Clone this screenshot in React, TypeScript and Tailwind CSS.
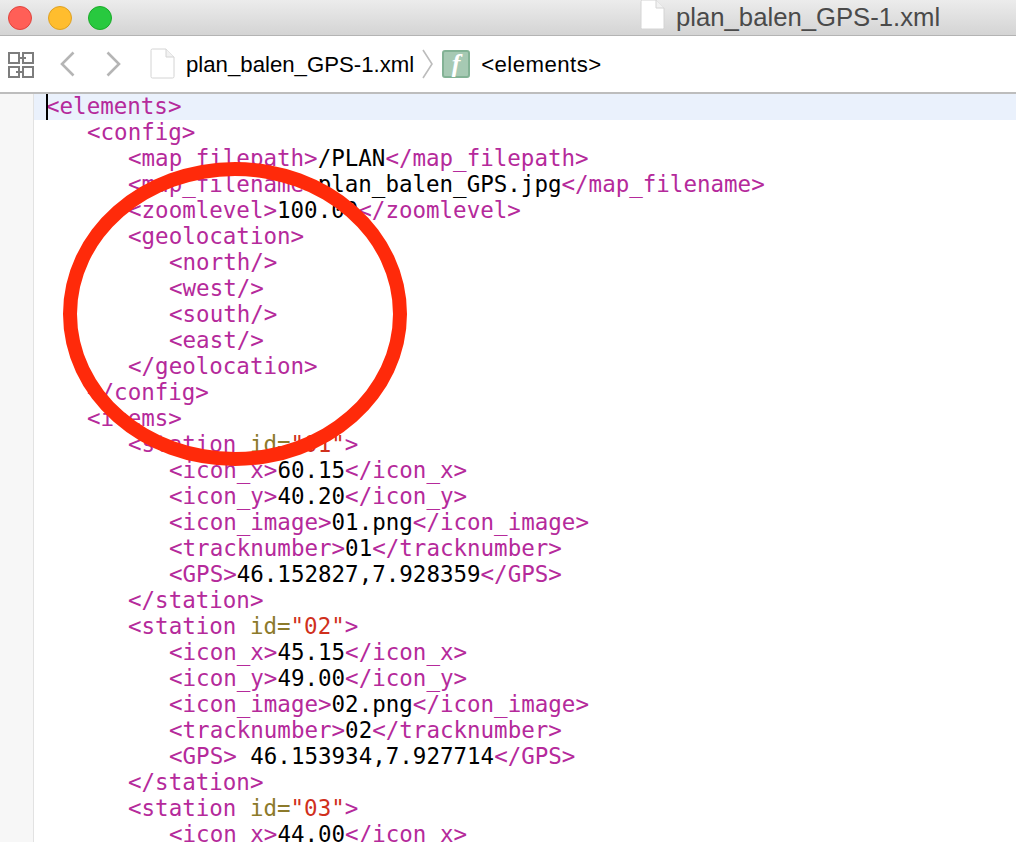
const T = ({ children }: { children: React.ReactNode }) => <span className="text-[#b52a9b]">{children}</span>;

type Line = { depth: number; open?: string; value?: string; close?: string };

const lines: Line[] = [
  { depth: 1, open: '<config>' },
  { depth: 2, open: '<map_filepath>', value: '/PLAN', close: '</map_filepath>' },
  { depth: 2, open: '<map_filename>', value: 'plan_balen_GPS.jpg', close: '</map_filename>' },
  { depth: 2, open: '<zoomlevel>', value: '100.00', close: '</zoomlevel>' },
  { depth: 2, open: '<geolocation>' },
  { depth: 3, open: '<north/>' },
  { depth: 3, open: '<west/>' },
  { depth: 3, open: '<south/>' },
  { depth: 3, open: '<east/>' },
  { depth: 2, open: '</geolocation>' },
  { depth: 1, open: '</config>' },
  { depth: 1, open: '<items>' },
];

const stations = [
  { id: '01', x: '60.15', y: '40.20', gps: '46.152827,7.928359' },
  { id: '02', x: '45.15', y: '49.00', gps: ' 46.153934,7.927714' },
];

const Row = ({ depth, children }: { depth: number; children: React.ReactNode }) => (
  <div className="h-[26px] whitespace-pre leading-[24px]" style={{ paddingLeft: depth * 41 }}>
    {children}
  </div>
);

const Tag = ({ depth, name, value }: { depth: number; name: string; value: string }) => (
  <Row depth={depth}>
    <T>{`<${name}>`}</T>
    {value}
    <T>{`</${name}>`}</T>
  </Row>
);

const StationOpen = ({ id }: { id: string }) => (
  <Row depth={2}>
    <T>{'<station '}</T>
    <span className="text-[#8c7a2b]">id=</span>
    <span className="text-[#d0301c]">{`"${id}"`}</span>
    <T>{'>'}</T>
  </Row>
);

const FileIcon = ({ className }: { className: string }) => (
  <svg viewBox="0 0 25 31" className={className}>
    <path d="M1 2.5 Q1 1 2.5 1 H16 L24 9 V28.5 Q24 30 22.5 30 H2.5 Q1 30 1 28.5 Z" fill="#fff" stroke="#d4d4d4" />
    <path d="M16 1 V9 H24" fill="#f2f2f2" stroke="#d4d4d4" />
  </svg>
);

export default function App() {
  return (
    <div className="relative h-[842px] w-[1016px] overflow-hidden bg-white font-['Liberation_Sans',sans-serif]">
      {/* title bar */}
      <div className="flex h-[36px] items-center border-b border-[#b4b4b4] bg-gradient-to-b from-[#ececec] to-[#d4d4d4] pl-2">
        <div className="flex gap-4">
          <div className="size-6 rounded-full border border-[#e0443e] bg-[#ff5f57]" />
          <div className="size-6 rounded-full border border-[#dea123] bg-[#ffbd2e]" />
          <div className="size-6 rounded-full border border-[#1aab29] bg-[#28c93f]" />
        </div>
        <div className="ml-[528px] flex items-center gap-[11px]">
          <FileIcon className="mt-[-6px] h-[31px] w-[25px]" />
          <span className="text-[25.7px] text-[#4a4a4a]">plan_balen_GPS-1.xml</span>
        </div>
      </div>

      {/* jump bar */}
      <div className="flex h-[58px] items-center border-b-2 border-[#bdbdbd] pl-2 text-black">
        <svg viewBox="0 0 26 26" className="mt-[1px] size-[26px]" fill="none" stroke="#7d7d7d" strokeWidth="2">
          <path d="M1 1h10v10H1zM15 1h10v10H15zM1 15h10v10H1zM15 15h10v10H15z" />
          <path d="M11 6h7M8 20h7" />
        </svg>
        <svg viewBox="0 0 15 26" className="ml-[26px] h-[26px] w-[15px]" fill="none" stroke="#b5b5b5" strokeWidth="2.6">
          <path d="M13.5 1.5 2 13l11.5 11.5" />
        </svg>
        <svg viewBox="0 0 15 26" className="ml-[31px] h-[26px] w-[15px]" fill="none" stroke="#b5b5b5" strokeWidth="2.6">
          <path d="M1.5 1.5 13 13 1.5 24.5" />
        </svg>
        <FileIcon className="ml-[29px] mt-[-2px] h-[31px] w-[25px]" />
        <span className="ml-[11px] pt-[2px] text-[22.2px] leading-none">plan_balen_GPS-1.xml</span>
        <svg viewBox="0 0 12 30" className="ml-[8px] h-[30px] w-[12px]" fill="none" stroke="#bcbcbc" strokeWidth="1.6">
          <path d="M1 1l9 14-9 14" />
        </svg>
        <div className="ml-[8px] flex size-[28px] items-center justify-center rounded-[3px] border-2 border-[#83b295] bg-[#a6c9b3] font-['Liberation_Serif',serif] text-[26px] font-bold italic leading-none text-white">
          f
        </div>
        <span className="ml-[11px] pt-[2px] text-[22.2px] leading-none tracking-[0.45px]">{'<elements>'}</span>
      </div>

      {/* editor */}
      <div className="flex">
        <div className="w-[34px] shrink-0 self-stretch border-r border-[#e2e2e2] bg-[#f7f7f7]" />
        <div className="min-w-0 flex-1 font-['DejaVu_Sans_Mono',monospace] text-[22.5px] text-black">
          <div className="flex h-[26px] bg-[#eaf1fc] pl-[12px] leading-[24px]">
            <div className="relative">
              <span className="absolute left-0 top-0 h-[26px] w-[2px] bg-black" />
              <T>{'<elements>'}</T>
            </div>
          </div>
          <div className="pl-[12px]">
            {lines.map((l) => (
              <Row key={l.open} depth={l.depth}>
                <T>{l.open}</T>
                {l.value}
                {l.close && <T>{l.close}</T>}
              </Row>
            ))}
            {stations.map((s, i) => (
              <div key={s.id}>
                <StationOpen id={s.id} />
                <Tag depth={3} name="icon_x" value={s.x} />
                <Tag depth={3} name="icon_y" value={s.y} />
                <Tag depth={3} name="icon_image" value={`${s.id}.png`} />
                <Tag depth={3} name="tracknumber" value={s.id} />
                <Tag depth={3} name="GPS" value={s.gps} />
                <Row depth={2}>
                  <T>{'</station>'}</T>
                </Row>
                {i === 1 && <StationOpen id="03" />}
              </div>
            ))}
            <Tag depth={3} name="icon_x" value="44.00" />
          </div>
        </div>
      </div>

      {/* red annotation circle drawn over the screenshot */}
      <div className="absolute left-[63px] top-[162px] h-[304px] w-[344px] rounded-[50%] border-[14px] border-[#ff2a0a]" />
    </div>
  );
}
